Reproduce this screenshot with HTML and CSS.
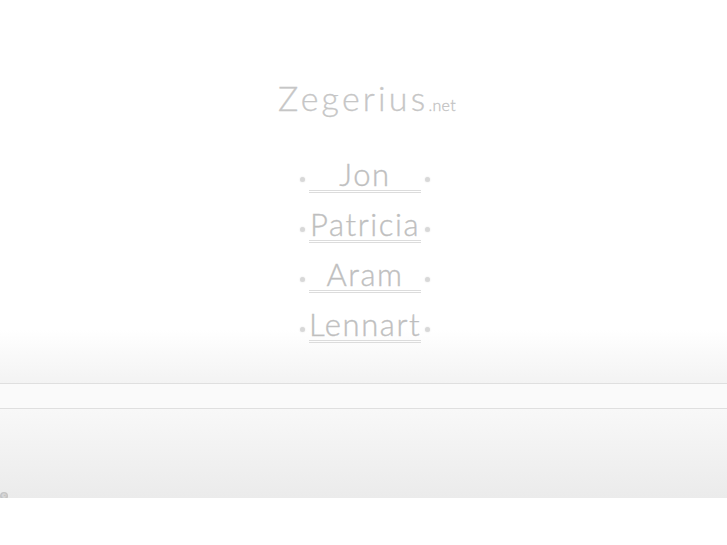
FILE: index.html
```html
<!DOCTYPE html>
<html lang="en">
<head>
  <meta charset="UTF-8">
  <title>Zegerius.net</title>
  <link rel="stylesheet" href="styles.css">
</head>
<body>

<div class="main">
  <h1 class="logo">Zegerius<span class="tld">.net</span></h1>
  <ul class="people">
    <li><span class="dot"></span><a href="#">Jon</a><span class="dot"></span></li>
    <li><span class="dot"></span><a href="#">Patricia</a><span class="dot"></span></li>
    <li><span class="dot"></span><a href="#">Aram</a><span class="dot"></span></li>
    <li><span class="dot"></span><a href="#">Lennart</a><span class="dot"></span></li>
  </ul>
</div>
<div class="band"></div>
<div class="footer">
  <span class="copy">&copy;</span>
</div>

</body>
</html>
```

FILE: styles.css
```css
body {
  margin: 0;
  font-family: Lato, "Open Sans", sans-serif;
  background: #fff;
}

.main {
  height: 383px;
  box-sizing: border-box;
  padding-top: 78px;
  background: linear-gradient(to bottom, #fff 330px, #f3f3f3 383px);
}

.logo {
  margin: 0;
  padding-left: 7px;
  text-align: center;
  font-weight: 300;
  font-size: 34px;
  line-height: 40px;
  letter-spacing: 3.2px;
  color: #c6c6c6;
  -webkit-text-stroke: 0.3px #c6c6c6;
}

.tld {
  font-size: 16px;
  letter-spacing: 0.3px;
  color: #bababa;
}

.people {
  list-style: none;
  margin: 25px 0 0;
  padding: 0 0 0 3px;
  display: flex;
  flex-direction: column;
  align-items: center;
}

.people li {
  display: flex;
  align-items: center;
  height: 50px;
}

.people a {
  display: block;
  width: 112px;
  margin: 0 4px;
  padding-top: 2px;
  text-align: center;
  font-weight: 300;
  font-size: 31px;
  line-height: 31px;
  letter-spacing: 1.6px;
  color: #bdbdbd;
  text-decoration: none;
  border-bottom: 3px double #dcdcdc;
  -webkit-text-stroke: 0.4px #c4c4c4;
}

.dot {
  width: 5px;
  height: 5px;
  border-radius: 50%;
  background: #d8d8d8;
  box-shadow: 0 0 2px #e4e4e4;
  margin-top: 8px;
}

.band {
  height: 24px;
  background: #fafafa;
  border-top: 1px solid #dfdfdf;
  border-bottom: 1px solid #dfdfdf;
}

.footer {
  height: 89px;
  display: flex;
  align-items: flex-end;
  background: linear-gradient(to bottom, #f8f8f8, #ebebeb);
}

.copy {
  width: 8px;
  height: 8px;
  margin-bottom: -2px;
  border-radius: 50%;
  background: #c4c4c4;
  color: #eee;
  font-size: 6px;
  line-height: 8px;
  text-align: center;
}
```
